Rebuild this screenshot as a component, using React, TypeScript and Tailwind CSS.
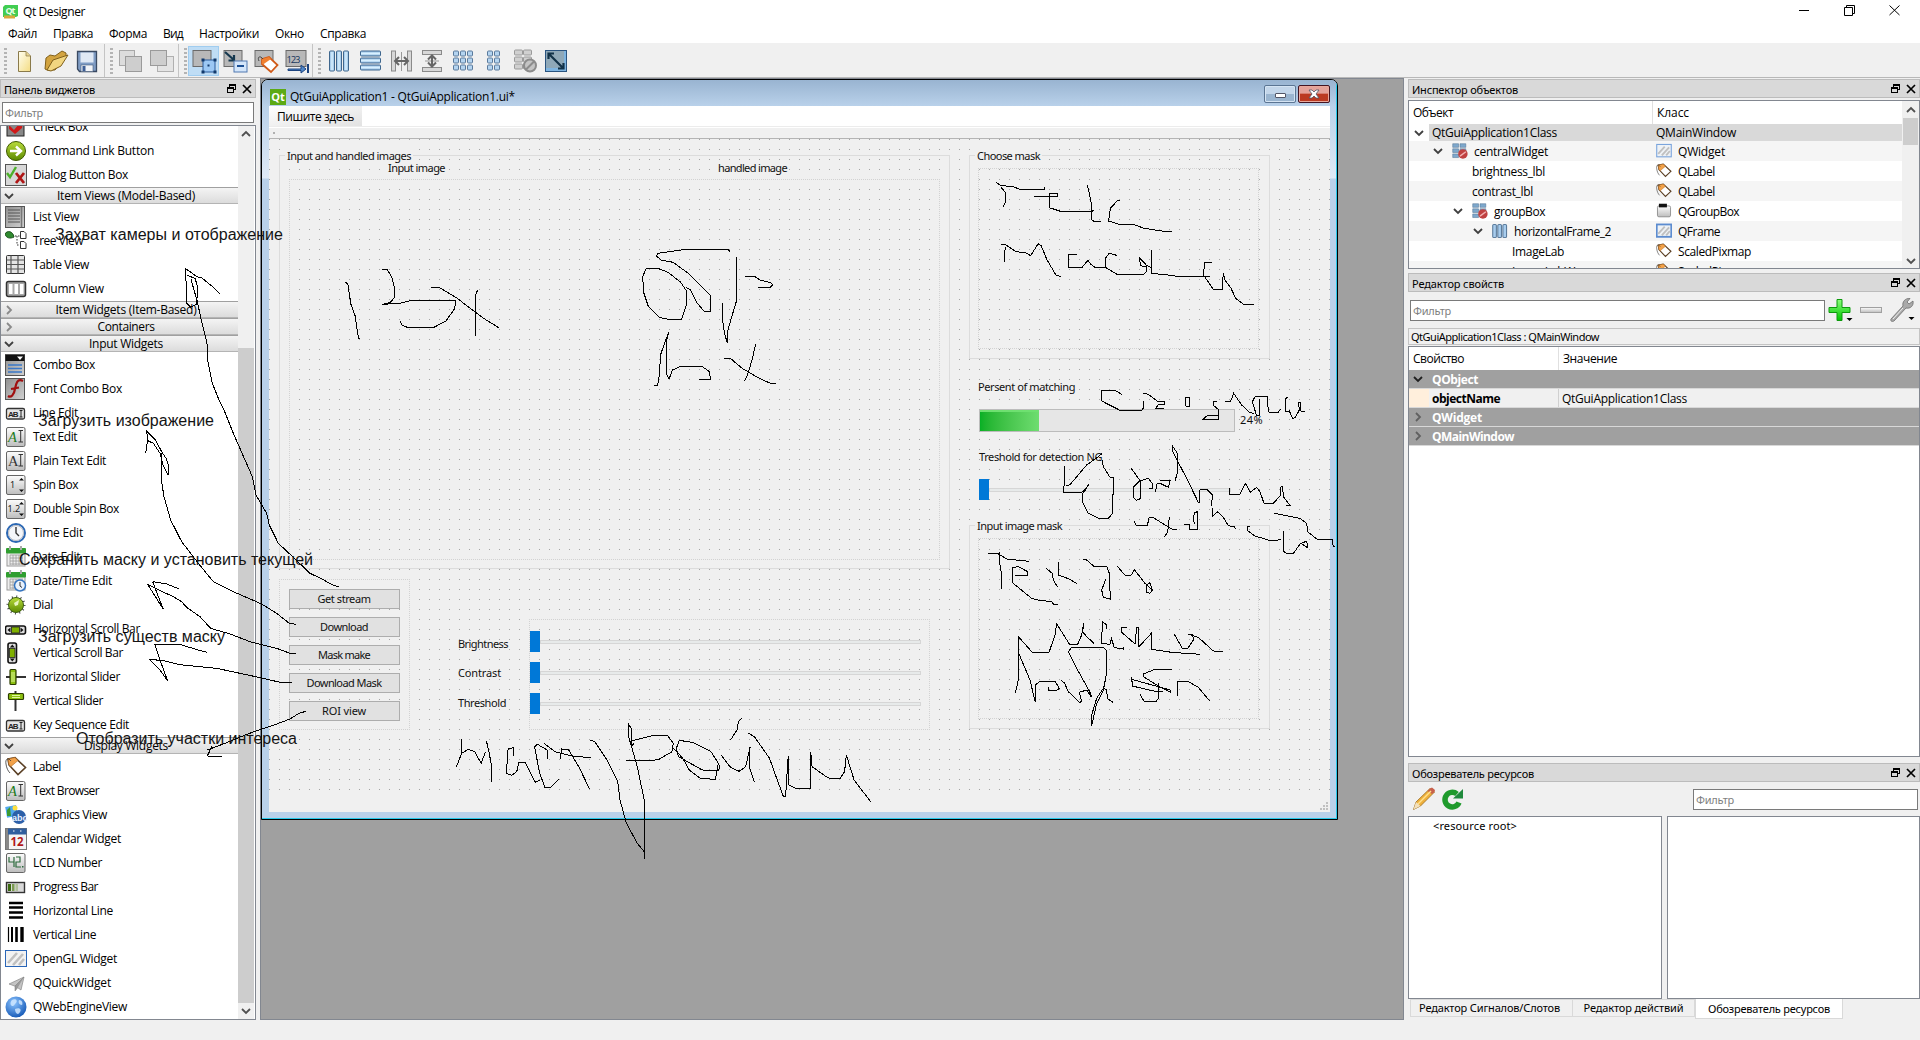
import { useLayoutEffect, useRef, useState } from "react";
import type { ReactNode } from "react";

/* ---------- text that keeps a fixed advance width ---------- */
function T({ w, children, className = "" }: { w: number; children: string; className?: string }) {
  const ref = useRef<HTMLSpanElement>(null);
  const [ls, setLs] = useState(0);
  useLayoutEffect(() => {
    const el = ref.current;
    if (!el) return;
    const prev = el.style.letterSpacing;
    el.style.letterSpacing = "0px";
    const natural = el.getBoundingClientRect().width;
    el.style.letterSpacing = prev;
    setLs((w - natural) / children.length);
  }, [w, children]);
  return (
    <span ref={ref} className={"inline-block shrink-0 whitespace-pre " + className} style={{ letterSpacing: `${ls}px` }}>
      {children}
    </span>
  );
}

const SEGOE = "font-['Open_Sans','Noto_Sans',sans-serif] text-[12px] leading-[16px]";
const TAHOMA = "font-['Noto_Sans','Open_Sans',sans-serif] text-[11px] leading-[14px]";

/* ---------- widget box icons ---------- */
function Defs() {
  return (
    <svg width="0" height="0" className="absolute">
      <defs>
        <linearGradient id="gr" x1="0" y1="0" x2="0" y2="1">
          <stop offset="0" stopColor="#fdfdfd" />
          <stop offset="1" stopColor="#bdbdbd" />
        </linearGradient>
        <linearGradient id="dk" x1="0" y1="0" x2="1" y2="1">
          <stop offset="0" stopColor="#8f8f8f" />
          <stop offset="1" stopColor="#d2d2d2" />
        </linearGradient>
        <linearGradient id="bl" x1="0" y1="0" x2="1" y2="0">
          <stop offset="0" stopColor="#8db8e0" />
          <stop offset="0.5" stopColor="#d8f0ff" />
          <stop offset="1" stopColor="#8db8e0" />
        </linearGradient>
        <linearGradient id="blv" x1="0" y1="0" x2="0" y2="1">
          <stop offset="0" stopColor="#8db8e0" />
          <stop offset="0.5" stopColor="#d8f0ff" />
          <stop offset="1" stopColor="#8db8e0" />
        </linearGradient>
        <linearGradient id="gn" x1="0" y1="0" x2="0" y2="1">
          <stop offset="0" stopColor="#b9dc3c" />
          <stop offset="1" stopColor="#5c8a00" />
        </linearGradient>
        <linearGradient id="yl" x1="0" y1="0" x2="1" y2="1">
          <stop offset="0" stopColor="#fffef0" />
          <stop offset="1" stopColor="#f4dc82" />
        </linearGradient>
        <radialGradient id="gl" cx="0.4" cy="0.3" r="0.8">
          <stop offset="0" stopColor="#8cc4ff" />
          <stop offset="1" stopColor="#0a4fb0" />
        </radialGradient>
        <linearGradient id="plus" x1="0" y1="0" x2="0" y2="1">
          <stop offset="0" stopColor="#8aff7a" />
          <stop offset="1" stopColor="#00c400" />
        </linearGradient>
      </defs>
    </svg>
  );
}

const Frame = () => <rect x="1.5" y="1.500" width="18.500" height="19" rx="1.500" fill="url(#gr)" stroke="#666" />;
const Hatch = () => (
  <g stroke="#c0c0c0" strokeWidth="2.6">
    <path d="M3 15 L12 5 M8 17 L18 6 M14 17 L19 11" />
  </g>
);
const TagShape = () => (
  <g>
    <path d="M3 3 L10 1.500 L20.500 11.500 L13 18.500 L4 9 Z" fill="#fff" stroke="#5b4025" strokeWidth="1.600" />
    <path d="M3 3 L10 1.500 L13 4.500 L6 10.500 L4 9 Z" fill="#f2a24a" stroke="#b06820" strokeWidth="0.600" />
    <path d="M6 5 C3 1 0 3 1 8 C1.500 12 3 15 5 17" fill="none" stroke="#333" strokeWidth="0.800" />
  </g>
);
const Calendar = () => (
  <g>
    <rect x="2" y="4" width="18" height="16" fill="#eee" stroke="#999" />
    <path d="M5 9H18M5 12H18M5 15H18M5 18H18M5 9V19M8 9V19M11 9V19M14 9V19M17 9V19" stroke="#999" strokeWidth="0.8" />
    <rect x="1" y="2" width="20" height="5.500" rx="1" fill="#2f9e2f" />
    <path d="M5 0V4M16 0V4" stroke="#aaa" strokeWidth="2" />
  </g>
);

function WIcon({ n }: { n: string }) {
  return (
    <svg width="22" height="22" viewBox="0 0 22 22" className="shrink-0">
      {n === "check" && (
        <g>
          <rect x="2" y="2" width="17" height="18" fill="#888" stroke="#222" />
          <path d="M4 9 L9 14 L18 3 L17 12 L10 18 L4 13 Z" fill="#d01818" />
        </g>
      )}
      {n === "cmd" && (
        <g>
          <circle cx="11" cy="11" r="9.500" fill="url(#gn)" stroke="#3e5a00" />
          <path d="M5 11H15M11 6.500L16 11L11 15.500" fill="none" stroke="#fff" strokeWidth="2.400" />
        </g>
      )}
      {n === "dlg" && (
        <g>
          <rect x="0.500" y="0.500" width="21" height="21" fill="#d8d8d8" stroke="#555" />
          <path d="M2 9L5 13L11 3" fill="none" stroke="#4cb02a" strokeWidth="2.400" />
          <path d="M11 9L19 19M19 9L11 19" stroke="#b01616" strokeWidth="2.800" />
        </g>
      )}
      {n === "list" && (
        <g>
          <rect x="0.500" y="0.500" width="19" height="21" fill="url(#dk)" stroke="#555" />
          <path d="M3 4H15M3 7H15M3 10H15M3 13H15M3 16H15" stroke="#555" />
          <path d="M16.500 1V21" stroke="#777" strokeWidth="1.500" />
        </g>
      )}
      {n === "tree" && (
        <g>
          <path d="M0 4C2 0 8 1 9 7C5 9 1 8 0 4Z" fill="#2f8a2f" stroke="#1c4f1c" />
          <path d="M10 6H15M12 6V15H15" fill="none" stroke="#333" strokeDasharray="1.500 1.500" />
          <path d="M15.500 1.500H19L21 3.500V8.500H15.500ZM15.500 11.500H19L21 13.500V18.500H15.500Z" fill="#fff" stroke="#333" />
        </g>
      )}
      {n === "table" && (
        <g>
          <rect x="1.500" y="1.500" width="18" height="18" rx="1" fill="#e4e4e4" stroke="#333" />
          <path d="M1.500 6H19.500M1.500 10.500H19.500M1.500 15H19.500M6 1.500V19.500M13 1.500V19.500" stroke="#555" strokeWidth="1.200" />
        </g>
      )}
      {n === "column" && (
        <g>
          <rect x="1.500" y="3.500" width="19" height="15" rx="2" fill="#a8a8a8" stroke="#333" strokeWidth="1.500" />
          <path d="M4 6H7.500V16H4ZM9.500 6H13V16H9.500ZM15 6H18.500V16H15Z" fill="#fff" />
        </g>
      )}
      {n === "combo" && (
        <g>
          <rect x="0.500" y="0.500" width="19" height="21" fill="url(#dk)" stroke="#555" />
          <rect x="0.500" y="1" width="19" height="6" fill="#111" />
          <path d="M12 2.500H18L15 6Z" fill="#fff" />
          <path d="M3 11H17M3 14.500H17M3 18H17" stroke="#3a78c8" strokeWidth="1.600" />
        </g>
      )}
      {n === "font" && (
        <g>
          <rect x="0.500" y="0.500" width="19" height="21" fill="url(#dk)" stroke="#555" />
          <path d="M18 3C12 0 11 6 10 11C9 17 6 20 3 18M6 11L14 9.500" fill="none" stroke="#a01010" strokeWidth="2.200" />
        </g>
      )}
      {n === "abi" && (
        <g>
          <rect x="1.500" y="6.500" width="18" height="10.500" rx="1.500" fill="#e4e4e4" stroke="#333" strokeWidth="1.300" />
          <text x="3" y="14.800" fontSize="8" textLength="10.500" fontWeight="bold" fill="#222" fontFamily="Liberation Sans">AB</text>
          <path d="M14.500 8.500H17.500M16 8.500V15M14.500 15H17.500" stroke="#222" fill="none" />
        </g>
      )}
      {(n === "ai" || n === "aig") && (
        <g>
          <Frame />
          <text x="3" y="16" fontSize="14.500" fontStyle={n === "aig" ? "italic" : "normal"} fill={n === "aig" ? "#1c7a1c" : "#333"} fontFamily="Liberation Serif">A</text>
          <path d="M13.500 4.500H18M15.700 4.500V16M13.500 16H18" stroke="#333" fill="none" />
        </g>
      )}
      {(n === "spin" || n === "dspin") && (
        <g>
          <Frame />
          <text x={n === "spin" ? 5 : 2.5} y="14" fontSize="9" fill="#222" fontFamily="Noto Sans">{n === "spin" ? "1" : "1.2"}</text>
          <path d="M14 6.500L16.500 4L19 6.500ZM14 15.500L16.500 18L19 15.500Z" fill="#111" />
        </g>
      )}
      {n === "time" && (
        <g>
          <circle cx="11" cy="11" r="9" fill="#f4f6fa" stroke="#2c68b4" strokeWidth="2" />
          <circle cx="11" cy="11" r="7.500" fill="none" stroke="#b8bcc4" strokeWidth="1" />
          <path d="M11 5V11L14 14" fill="none" stroke="#333" strokeWidth="1.400" />
        </g>
      )}
      {n === "date" && <Calendar />}
      {n === "datetime" && (
        <g>
          <Calendar />
          <circle cx="15" cy="15.500" r="5.500" fill="#e8f1fc" stroke="#3474c0" strokeWidth="1.500" />
          <path d="M15 12V16L17 17.500" fill="none" stroke="#333" />
        </g>
      )}
      {n === "dial" && (
        <g>
          <circle cx="11" cy="11" r="8.500" fill="none" stroke="#444" strokeWidth="2" strokeDasharray="1 3.450" />
          <circle cx="11" cy="11" r="7.500" fill="url(#gn)" stroke="#3c5e10" />
          <path d="M14 6L13 11L10 12L9 9Z" fill="#e8f5c0" />
        </g>
      )}
      {n === "hscroll" && (
        <g>
          <rect x="0.500" y="8" width="20" height="8" rx="2" fill="#ddd" stroke="#111" strokeWidth="1.600" />
          <path d="M5.500 9.500V14.500L2.500 12ZM15.500 9.500V14.500L18.500 12Z" fill="#111" />
          <rect x="6.500" y="9" width="8" height="6" fill="#7fb000" stroke="#222" strokeWidth="0.800" />
        </g>
      )}
      {n === "vscroll" && (
        <g>
          <rect x="3" y="1" width="8.500" height="20" rx="2" fill="#ddd" stroke="#111" strokeWidth="1.600" />
          <path d="M4.800 5.500H9.800L7.300 2.500ZM4.800 16.500H9.800L7.300 19.500Z" fill="#111" />
          <rect x="4.500" y="6.500" width="5.500" height="9" fill="#7fb000" stroke="#222" strokeWidth="0.800" />
        </g>
      )}
      {n === "hslider" && (
        <g>
          <path d="M1 11H21" stroke="#333" strokeWidth="2" />
          <rect x="5" y="3.500" width="6" height="15" rx="1" fill="#8cc010" stroke="#2c3c00" strokeWidth="1.200" />
          <path d="M7 6V16M9 6V16" stroke="#e0f8a0" />
        </g>
      )}
      {n === "vslider" && (
        <g>
          <path d="M10.500 1V21" stroke="#333" strokeWidth="2" />
          <rect x="3.500" y="3.500" width="15" height="6" rx="1" fill="#8cc010" stroke="#2c3c00" strokeWidth="1.200" />
          <path d="M7 5.500H15M7 7.500H15" stroke="#e0f8a0" />
        </g>
      )}
      {n === "label" && <TagShape />}
      {n === "graphics" && (
        <g>
          <rect x="1" y="2" width="11" height="11" fill="#4fa8ee" transform="rotate(-10 6 7)" />
          <circle cx="10" cy="4" r="2.500" fill="#ffe040" />
          <path d="M2 6L5 3L6 12L2 12Z" fill="#3c9a30" />
          <circle cx="14" cy="13" r="7" fill="#2c5fa8" />
          <text x="7" y="17" fontSize="9" fill="#e6efff" fontFamily="Liberation Sans" fontWeight="bold">abc</text>
        </g>
      )}
      {n === "calendar" && (
        <g>
          <rect x="0.500" y="0.500" width="21" height="21" fill="#f4f4f4" stroke="#777" />
          <rect x="1" y="1" width="3" height="20" fill="#888" />
          <rect x="3" y="0.500" width="18.500" height="6" fill="#2f5e9e" />
          <path d="M8 3H9.500M15 3H16.500" stroke="#fff" />
          <text x="5.500" y="18" fontSize="11.500" fill="#b01818" fontFamily="Noto Sans" fontWeight="bold">12</text>
        </g>
      )}
      {n === "lcd" && (
        <g>
          <Frame />
          <path d="M4 5V10H9M9 5V15M11 5H15V10H11V15H16" fill="none" stroke="#2c6a3c" strokeWidth="1.200" />
          <rect x="17" y="14" width="1.500" height="1.500" fill="#2c6a3c" />
        </g>
      )}
      {n === "progress" && (
        <g>
          <rect x="1.500" y="6.500" width="18" height="10" fill="#d8d8d8" stroke="#333" strokeWidth="1.400" />
          <path d="M3 8H6V15H3Z" fill="#3c6a10" />
          <path d="M7 8H9.500V15H7Z" fill="#7a9a50" />
          <path d="M10.500 8H13V15H10.500Z" fill="#b0c09a" />
        </g>
      )}
      {n === "hline" && <path d="M4 3H18M4 7.500H18M4 12.500H18M4 17.500H18" stroke="#000" strokeWidth="2.600" />}
      {n === "vline" && (
        <g stroke="#000">
          <path d="M3.500 3V18" strokeWidth="1.200" />
          <path d="M7 3V18" strokeWidth="2" />
          <path d="M11.500 3V18" strokeWidth="2.600" />
          <path d="M17 3V18" strokeWidth="3.400" />
        </g>
      )}
      {n === "opengl" && (
        <g>
          <rect x="0.500" y="2.500" width="21" height="16" fill="#f2f2f2" stroke="#2a66b8" />
          <Hatch />
        </g>
      )}
      {n === "quick" && (
        <g>
          <path d="M4 12L19 5L16 18L11 14.500Z" fill="#c4c4c4" stroke="#888" strokeWidth="0.700" />
          <path d="M19 5L10 14L10 19L12.500 16" fill="#9a9a9a" stroke="#777" strokeWidth="0.500" />
        </g>
      )}
      {n === "web" && (
        <g>
          <circle cx="11" cy="11" r="10.500" fill="url(#gl)" />
          <path d="M7 4C11 2 13 5 11 7C9 8 10 10 7 10C5 9 5 6 7 4ZM14 4C17 4 18 7 17 9C14 9 13 6 14 4ZM10 13C14 11 17 13 15 16C13 20 10 17 10 13Z" fill="#cfe6ff" opacity="0.850" />
        </g>
      )}
    </svg>
  );
}

const CHEV_DOWN = "M1 3L5 7L9 3";
const CHEV_RIGHT = "M3 1L7 5L3 9";
const CHEV_UP = "M1 7L5 3L9 7";
function Chevron({ d, color = "#404040" }: { d: string; color?: string }) {
  return (
    <svg width="10" height="10" viewBox="0 0 10 10" className="shrink-0">
      <path d={d} fill="none" stroke={color} strokeWidth="1.8" />
    </svg>
  );
}

function DockTitle({ title, w }: { title: string; w: number }) {
  return (
    <div className={"flex h-[19px] shrink-0 items-center border border-[#bcbcbc] bg-[#d9d9d9] pl-[3px] pr-[3px] " + TAHOMA}>
      <T w={w} className="pt-[2px]">{title}</T>
      <svg width="10" height="10" viewBox="0 0 10 10" className="ml-auto mr-[6px]" shapeRendering="crispEdges">
        <path d="M3 0H10V6H8V9H1V3H3Z" fill="#000" />
        <path d="M4 2H9V5H8V3H4ZM2 5H7V8H2Z" fill="#d9d9d9" />
      </svg>
      <svg width="10" height="10" viewBox="0 0 10 10">
        <path d="M1 1L9 9M9 1L1 9" stroke="#000" strokeWidth="1.700" />
      </svg>
    </div>
  );
}

function FilterBox({ className }: { className: string }) {
  return (
    <div className={"flex h-[21px] items-center border border-[#7a7a7a] bg-white pl-[2px] text-[#808080] " + TAHOMA + " " + className}>
      <T w={38} className="pt-px">Фильтр</T>
    </div>
  );
}

/* ---------- widget box ---------- */
type Row = { i: string; t: string; w: number };
type Group = { t: string; w: number; open: boolean; rows: Row[] };
const lead: Row[] = [
  { i: "check", t: "Check Box", w: 55 },
  { i: "cmd", t: "Command Link Button", w: 121 },
  { i: "dlg", t: "Dialog Button Box", w: 95 },
];
const groups: Group[] = [
  {
    t: "Item Views (Model-Based)", w: 138, open: true,
    rows: [
      { i: "list", t: "List View", w: 46 },
      { i: "tree", t: "Tree View", w: 50 },
      { i: "table", t: "Table View", w: 56 },
      { i: "column", t: "Column View", w: 71 },
    ],
  },
  { t: "Item Widgets (Item-Based)", w: 141, open: false, rows: [] },
  { t: "Containers", w: 57, open: false, rows: [] },
  {
    t: "Input Widgets", w: 74, open: true,
    rows: [
      { i: "combo", t: "Combo Box", w: 62 },
      { i: "font", t: "Font Combo Box", w: 89 },
      { i: "abi", t: "Line Edit", w: 45 },
      { i: "aig", t: "Text Edit", w: 44 },
      { i: "ai", t: "Plain Text Edit", w: 73 },
      { i: "spin", t: "Spin Box", w: 45 },
      { i: "dspin", t: "Double Spin Box", w: 86 },
      { i: "time", t: "Time Edit", w: 50 },
      { i: "date", t: "Date Edit", w: 47 },
      { i: "datetime", t: "Date/Time Edit", w: 79 },
      { i: "dial", t: "Dial", w: 20 },
      { i: "hscroll", t: "Horizontal Scroll Bar", w: 107 },
      { i: "vscroll", t: "Vertical Scroll Bar", w: 90 },
      { i: "hslider", t: "Horizontal Slider", w: 87 },
      { i: "vslider", t: "Vertical Slider", w: 70 },
      { i: "abi", t: "Key Sequence Edit", w: 96 },
    ],
  },
  {
    t: "Display Widgets", w: 84, open: true,
    rows: [
      { i: "label", t: "Label", w: 28 },
      { i: "aig", t: "Text Browser", w: 66 },
      { i: "graphics", t: "Graphics View", w: 74 },
      { i: "calendar", t: "Calendar Widget", w: 88 },
      { i: "lcd", t: "LCD Number", w: 69 },
      { i: "progress", t: "Progress Bar", w: 65 },
      { i: "hline", t: "Horizontal Line", w: 80 },
      { i: "vline", t: "Vertical Line", w: 63 },
      { i: "opengl", t: "OpenGL Widget", w: 84 },
      { i: "quick", t: "QQuickWidget", w: 78 },
      { i: "web", t: "QWebEngineView", w: 94 },
    ],
  },
];

function WRow({ r }: { r: Row }) {
  return (
    <div className="flex h-[24px] shrink-0 items-center gap-[6px] pl-[4px]">
      <WIcon n={r.i} />
      <T w={r.w}>{r.t}</T>
    </div>
  );
}

function WidgetBox() {
  return (
    <div className="flex w-[256px] flex-col pt-px">
      <DockTitle title="Панель виджетов" w={91} />
      <FilterBox className="ml-[2px] mr-[2px] mt-[4px]" />
      <div className="mt-[2px] flex h-[895px] border border-[#828790] bg-white">
        <div className={"flex h-full w-[237px] flex-col justify-end overflow-hidden " + SEGOE}>
          {lead.map((r) => <WRow key={r.t} r={r} />)}
          {groups.map((g) => (
            <div key={g.t} className="flex shrink-0 flex-col">
              <div className="flex h-[17px] items-center border-y border-t-[#a0a0a0] border-b-[#b4b4b4] bg-linear-to-b from-[#f4f4f4] to-[#dcdcdc] pl-[3px]">
                <Chevron d={g.open ? CHEV_DOWN : CHEV_RIGHT} color={g.open ? "#404040" : "#8a8a8a"} />
                <div className="flex flex-1 justify-center">
                  <T w={g.w}>{g.t}</T>
                </div>
              </div>
              {g.open && <div className="h-px" />}
              {g.rows.map((r) => <WRow key={r.t} r={r} />)}
            </div>
          ))}
        </div>
        <div className="flex w-[16px] flex-col items-center bg-[#f0f0f0]">
          <div className="pt-[3px]"><Chevron d={CHEV_UP} color="#505050" /></div>
          <div className="mt-auto h-[655px] w-full bg-[#cdcdcd]" />
          <div className="flex h-[16px] items-center"><Chevron d={CHEV_DOWN} color="#505050" /></div>
        </div>
      </div>
    </div>
  );
}

/* ---------- toolbar ---------- */
function TB({ children, active, className = "" }: { children: ReactNode; active?: boolean; className?: string }) {
  return (
    <div className={"flex h-[30px] w-[31px] shrink-0 items-center justify-center " + (active ? "bg-[#bfddf5] outline outline-1 -outline-offset-1 outline-[#a0cdf0] " : "") + className}>
      <svg width="26" height="26" viewBox="0 0 26 26">{children}</svg>
    </div>
  );
}
function Handle() {
  return <div className="h-[26px] w-[3px] shrink-0 bg-[repeating-linear-gradient(#b4b4b4_0_2px,transparent_2px_4px)]" />;
}
const Sep = () => <div className="mr-[5px] h-[33px] w-px shrink-0 bg-[#c4c4c4]" />;
const grayBox = { fill: "#b8b8b8", stroke: "#6a6a6a" };

function ToolbarRow() {
  return (
    <div className="flex h-[35px] items-center pl-[4px]">
      <Handle />
      <TB className="ml-[2px]">
        <path d="M6.500 3.500H14L18.500 8V23.500H6.500Z" fill="url(#yl)" stroke="#8a7a4a" />
        <path d="M14 3.500V8H18.500" fill="#e8d490" stroke="#8a7a4a" strokeWidth="0.700" />
      </TB>
      <TB>
        <path d="M2 21L3 10L7 7L12 8L19 3L23 5V9L12 22H4Z" fill="#d3a440" stroke="#80601c" />
        <path d="M4 22L10 12L25 7L18 18L8 23Z" fill="#f2d680" stroke="#80601c" />
      </TB>
      <TB>
        <path d="M3.500 3.500H22.500V23.500H5.500L3.500 21Z" fill="#7f9cc4" stroke="#3a4a62" strokeWidth="1.300" />
        <rect x="6.500" y="4.500" width="13" height="10" fill="#dfe8f4" />
        <rect x="7" y="17" width="12" height="6.500" fill="#f2f4f8" stroke="#445a7a" strokeWidth="0.600" />
        <rect x="8.500" y="18" width="3" height="5" fill="#3e5f96" />
      </TB>
      <div className="w-[2px]" />
      <Sep />
      <Handle />
      <TB className="ml-[2px]">
        <rect x="1.500" y="2.500" width="15" height="15" fill="#dcdcdc" stroke="#a8a8a8" />
        <rect x="7.500" y="8.500" width="16" height="15" fill="#cecece" stroke="#9a9a9a" />
      </TB>
      <TB>
        <rect x="8.500" y="8.500" width="16" height="15" fill="#e4e4e4" stroke="#b0b0b0" />
        <rect x="1.500" y="2.500" width="16" height="15" fill="#cecece" stroke="#9a9a9a" />
      </TB>
      <div className="w-px" />
      <Sep />
      <Handle />
      <TB active className="ml-[1px]">
        <rect x="2" y="2.500" width="18" height="16" {...grayBox} />
        <rect x="12" y="12" width="12" height="12" fill="#9cc8f4" stroke="#2a5a9a" />
        <path d="M10.500 10.500h3v3h-3zM22.500 10.500h3v3h-3zM10.500 22.500h3v3h-3zM22.500 22.500h3v3h-3zM16.500 16.500h2v2h-2z" fill="#123a6c" />
      </TB>
      <TB>
        <rect x="2" y="2.500" width="18" height="16" {...grayBox} />
        <path d="M3 4L12 12M12 7V12.500H6.500" stroke="#16384e" strokeWidth="2.200" fill="none" />
        <rect x="12" y="13" width="13" height="11" fill="#d4e6fa" stroke="#5078b0" />
        <path d="M15 18H22" stroke="#1c4f94" strokeWidth="2" />
      </TB>
      <TB>
        <rect x="2" y="2.500" width="18" height="16" {...grayBox} />
        <path d="M9 11L16 9L24.500 17L18 24L9 16Z" fill="#fff" stroke="#d05a18" strokeWidth="1.800" />
        <path d="M9 11L16 9L18 11L10 16.500L9 16Z" fill="#f08030" />
        <path d="M10 11C7 7 4 9 6 13" fill="none" stroke="#444" />
      </TB>
      <TB>
        <rect x="2" y="2.500" width="20" height="16" {...grayBox} />
        <text x="2.500" y="15" fontSize="9.500" fontFamily="Open Sans" fill="#16355c" textLength="14">123</text>
        <path d="M4 21H17V17L22 21L17 25V22.500H4Z" fill="#4f86c8" stroke="#1d4480" />
        <path d="M24 16V25" stroke="#1d4480" strokeWidth="2" />
      </TB>
      <Sep />
      <Handle />
      <TB className="ml-[2px]">
        {[3.5, 10.5, 17.5].map((x) => <rect key={x} x={x} y="3" width="5" height="20" rx="1" fill="url(#bl)" stroke="#3f678e" />)}
      </TB>
      <TB>
        {[3, 10, 17].map((y) => <rect key={y} x="3.500" y={y} width="20" height="5" rx="1" fill="url(#blv)" stroke="#3f678e" />)}
      </TB>
      <TB>
        <rect x="3.500" y="3" width="4" height="20" fill="#d8d8d8" stroke="#8a8a8a" />
        <rect x="19.500" y="3" width="4" height="20" fill="#d8d8d8" stroke="#8a8a8a" />
        <path d="M13.500 4V23" stroke="#999" />
        <path d="M7 13H20M11 9L7 13L11 17M16 9L20 13L16 17" fill="none" stroke="#666" strokeWidth="2" />
      </TB>
      <TB>
        <rect x="3.500" y="2.500" width="19" height="4" fill="#d8d8d8" stroke="#8a8a8a" />
        <rect x="3.500" y="19.500" width="19" height="4" fill="#d8d8d8" stroke="#8a8a8a" />
        <path d="M6 13H20" stroke="#999" />
        <path d="M13 8V18M9 11.500L13 7.500L17 11.500M9 14.500L13 18.500L17 14.500" fill="none" stroke="#666" strokeWidth="2" />
      </TB>
      <TB>
        {[3, 10, 17].map((y) => [3.5, 10.5, 17.5].map((x) => <rect key={`${x}-${y}`} x={x} y={y} width="5" height="5" rx="1" fill="#b4d4f0" stroke="#5a7a9c" />))}
      </TB>
      <TB>
        {[3, 10, 17].map((y) => [6.5, 13.5].map((x) => <rect key={`${x}-${y}`} x={x} y={y} width="5" height="5" rx="1" fill="#b4d4f0" stroke="#5a7a9c" />))}
      </TB>
      <TB>
        {[2, 9, 16].map((y) => [2.5, 11.5].map((x) => <rect key={`${x}-${y}`} x={x} y={y} width="8" height="5" rx="1" fill="#d0d0d0" stroke="#9a9a9a" />))}
        <circle cx="18" cy="17.500" r="6" fill="#c4c4c4" stroke="#8c8c8c" strokeWidth="2" />
        <path d="M14 21.500L22 13.500" stroke="#8c8c8c" strokeWidth="2" />
      </TB>
      <TB>
        <rect x="2.500" y="2.500" width="21" height="21" fill="#7fb4e0" stroke="#2a5480" />
        <rect x="3" y="3" width="18" height="17" fill="#8fa8b8" />
        <path d="M6 6L20 20M5.500 11V5.500H11M20.500 15V20.500H15" fill="none" stroke="#123248" strokeWidth="2.200" />
      </TB>
    </div>
  );
}

/* ---------- designed form ---------- */
function GroupFrame({ className, title, w }: { className: string; title: string; w: number }) {
  return (
    <div className={"absolute border border-[#dcdcdc] " + className}>
      <div className="absolute -top-[8px] left-[5px] flex h-[15px] items-center bg-[#f0f0f0] px-[2px]">
        <T w={w}>{title}</T>
      </div>
    </div>
  );
}
function Dotted({ className }: { className: string }) {
  return <div className={"absolute border border-dotted border-[#d2d2d2] " + className} />;
}
function Lbl({ className, children, w }: { className: string; children: string; w: number }) {
  return <div className={"absolute flex h-[14px] items-center " + className}><T w={w}>{children}</T></div>;
}
function Slider({ className }: { className: string }) {
  return (
    <div className={"absolute flex h-[21px] items-center " + className}>
      <div className="h-full w-[10px] bg-[#0078d7]" />
      <div className="h-[4px] flex-1 border border-[#d6d6d6] bg-[#e7eaea]" />
    </div>
  );
}

const buttons = [
  { t: "Get stream", w: 53 },
  { t: "Download", w: 48 },
  { t: "Mask make", w: 52 },
  { t: "Download Mask", w: 75 },
  { t: "ROI view", w: 44 },
];

function FormCanvas() {
  return (
    <div className={"relative h-[673px] bg-[#f0f0f0] text-[#111] " + TAHOMA}>
      <div className="h-[651px] bg-[linear-gradient(90deg,transparent_1px,#f0f0f0_1px),linear-gradient(#a4a4a4_1px,#f0f0f0_1px)] bg-[length:10px_10px]" />
      <GroupFrame className="left-[10px] top-[16px] h-[414px] w-[671px]" title="Input and handled images" w={124} />
      <Lbl className="left-[119px] top-[22px]" w={57}>Input image</Lbl>
      <Lbl className="left-[449px] top-[22px]" w={69}>handled image</Lbl>
      <Dotted className="left-[20px] top-[40px] h-[381px] w-[651px]" />
      <GroupFrame className="left-[700px] top-[16px] h-[204px] w-[301px]" title="Choose mask" w={63} />
      <Dotted className="left-[709px] top-[29px] h-[181px] w-[281px]" />
      <Lbl className="left-[709px] top-[241px]" w={97}>Persent of matching</Lbl>
      <div className="absolute left-[710px] top-[270px] flex h-[23px] w-[256px] border border-[#bcbcbc] bg-[#e6e6e6]">
        <div className="h-full w-[59px] border-t-2 border-t-[#6ee070] bg-linear-to-r from-[#06b025] to-[#6edd70]" />
      </div>
      <Lbl className="left-[971px] top-[274px]" w={23}>24%</Lbl>
      <Lbl className="left-[710px] top-[311px]" w={123}>Treshold for detection NG</Lbl>
      <Slider className="left-[710px] top-[340px] w-[252px]" />
      <GroupFrame className="left-[700px] top-[386px] h-[204px] w-[301px]" title="Input image mask" w={85} />
      <Dotted className="left-[709px] top-[399px] h-[181px] w-[281px]" />

      <div className="absolute left-[10px] top-[440px] flex h-[151px] w-[131px] flex-col gap-[8px] border border-dotted border-[#d2d2d2] px-[9px] pt-[9px]">
        {buttons.map((b) => (
          <div key={b.t} className="flex h-[20px] shrink-0 items-center justify-center border border-[#adadad] bg-[#e1e1e1] pr-px">
            <T w={b.w}>{b.t}</T>
          </div>
        ))}
      </div>
      <Lbl className="left-[189px] top-[498px]" w={50}>Brightness</Lbl>
      <Lbl className="left-[189px] top-[527px]" w={43}>Contrast</Lbl>
      <Lbl className="left-[189px] top-[557px]" w={48}>Threshold</Lbl>
      <Dotted className="left-[260px] top-[480px] h-[111px] w-[401px]" />
      <Slider className="left-[261px] top-[492px] w-[391px]" />
      <Slider className="left-[261px] top-[523px] w-[391px]" />
      <Slider className="left-[261px] top-[554px] w-[391px]" />
      <svg width="10" height="10" viewBox="0 0 10 10" className="absolute bottom-[1px] right-[1px]">
        <path d="M7 1h2v2h-2zM4 4h2v2h-2zM7 4h2v2h-2zM1 7h2v2h-2zM4 7h2v2h-2zM7 7h2v2h-2z" fill="#c0c0c0" />
      </svg>
    </div>
  );
}

function FormWindow() {
  return (
    <div className="absolute left-0 top-0 flex h-[741px] w-[1077px] flex-col overflow-hidden rounded-t-[7px] border border-black bg-[#b9d1ea]">
      <div className="flex min-h-0 flex-1 flex-col border-b border-r border-[#27c8ea]">
        <div className={"flex h-[26px] shrink-0 items-center bg-linear-to-b from-[#99b4d1] to-[#b9d1ea] pl-[8px] pr-[6px] " + SEGOE}>
          <div className="mt-[7px] flex h-[16px] w-[16px] items-center justify-center bg-[#5caa15] font-['Open_Sans',sans-serif] text-[11px] font-bold text-white">Qt</div>
          <T w={225} className="ml-[4px] mt-[8px]">QtGuiApplication1 - QtGuiApplication1.ui*</T>
          <div className="ml-auto mt-[2px] flex gap-[2px]">
            <div className="flex h-[18px] w-[32px] items-center justify-center rounded-[2px] border border-[#5b7593] bg-linear-to-b from-[#c3d6ea] from-50% to-[#9ab5d0] to-50% shadow-[inset_0_0_0_1px_#d5e4f3]">
              <div className="mt-[3px] h-[5px] w-[11px] rounded-[1px] border border-[#535666] bg-white" />
            </div>
            <div className="flex h-[18px] w-[32px] items-center justify-center rounded-[2px] border border-[#431422] bg-linear-to-b from-[#e4a29a] from-45% to-[#bb3a22] to-50% shadow-[inset_0_0_0_1px_#e8a89c]">
              <svg width="12" height="10" viewBox="0 0 12 10">
                <path d="M1 1H4L6 3L8 1H11L8 5L11 9H8L6 7L4 9H1L4 5Z" fill="#fff" stroke="#535666" strokeWidth="0.800" />
              </svg>
            </div>
          </div>
        </div>
        <div className="flex min-h-0 flex-1 bg-[linear-gradient(#b9d1ea,#dfeaf7_72px,#b9d1ea_73px)] pb-[6px] pl-[7px] pr-[6px]">
          <div className="flex w-full flex-col">
            <div className={"flex h-[20px] bg-white " + SEGOE}>
              <div className="flex w-[93px] items-center bg-linear-to-br from-white to-[#e2e2e2] pl-[8px]">
                <T w={77} className="pt-[2px]">Пишите здесь</T>
              </div>
            </div>
            <div className="h-px bg-[#ececec]" />
            <div className="flex h-[12px] items-center border-b border-t border-b-[#b4b4b4] border-t-white bg-[#f0f0f0] pl-[4px]">
              <div className="h-[2px] w-[2px] bg-[#b0b0b0]" />
            </div>
            <FormCanvas />
          </div>
        </div>
      </div>
    </div>
  );
}

/* ---------- right docks ---------- */
type Obj = { pad: string; chev?: boolean; icon?: string; t: string; w: number; ci: string; c: string; cw: number; bg: string };
const objs: Obj[] = [
  { pad: "pl-[24px]", chev: true, icon: "nolayout", t: "centralWidget", w: 74, ci: "widget", c: "QWidget", cw: 47, bg: "bg-[#f5f5f5]" },
  { pad: "pl-[63px]", t: "brightness_lbl", w: 73, ci: "label", c: "QLabel", cw: 37, bg: "bg-white" },
  { pad: "pl-[63px]", t: "contrast_lbl", w: 61, ci: "label", c: "QLabel", cw: 37, bg: "bg-[#f5f5f5]" },
  { pad: "pl-[44px]", chev: true, icon: "nolayout", t: "groupBox", w: 51, ci: "group", c: "QGroupBox", cw: 61, bg: "bg-white" },
  { pad: "pl-[64px]", chev: true, icon: "hlayout", t: "horizontalFrame_2", w: 97, ci: "frame", c: "QFrame", cw: 42, bg: "bg-[#f5f5f5]" },
  { pad: "pl-[103px]", t: "ImageLab", w: 52, ci: "label", c: "ScaledPixmap", cw: 73, bg: "bg-white" },
  { pad: "pl-[103px]", t: "ImageLabW", w: 63, ci: "label", c: "ScaledPixmap", cw: 73, bg: "bg-[#f5f5f5]" },
];

function ObjIcon({ n }: { n: string }) {
  return (
    <svg width="16" height="16" viewBox="0 0 22 22" className="shrink-0">
      {n === "nolayout" && (
        <g>
          <path d="M1 1h8v5h-8zM11 1h8v5h-8zM1 8h8v5h-8zM11 8h8v5h-8zM1 15h8v5h-8z" fill="#7ea8cc" stroke="#4c6e90" strokeWidth="0.700" />
          <circle cx="15" cy="15" r="6.500" fill="#c04040" />
          <path d="M11 18L19 12" stroke="#f0b0b0" strokeWidth="2" />
        </g>
      )}
      {n === "hlayout" && [1, 8, 15].map((x) => <rect key={x} x={x} y="2" width="5" height="18" rx="1.500" fill="#a8cdee" stroke="#5c7c9c" strokeWidth="1.500" />)}
      {(n === "widget" || n === "frame") && (
        <g>
          <rect x="1" y="2" width="20" height="17" fill="#eef2f6" stroke={n === "frame" ? "#5c8cd0" : "#7aa4dc"} strokeWidth={n === "frame" ? 2.5 : 1.5} />
          <Hatch />
        </g>
      )}
      {n === "label" && <TagShape />}
      {n === "group" && (
        <g>
          <rect x="2" y="4" width="18" height="15" rx="2" fill="url(#gr)" stroke="#777" />
          <rect x="4" y="1" width="11" height="5" fill="#111" />
        </g>
      )}
    </svg>
  );
}

function ObjectInspector() {
  return (
    <>
      <DockTitle title="Инспектор объектов" w={106} />
      <div className={"mt-[2px] flex h-[169px] border border-[#828790] bg-white " + SEGOE}>
        <div className="flex w-[493px] flex-col overflow-hidden">
          <div className="flex h-[23px] shrink-0 items-center">
            <div className="flex h-full w-[244px] items-center border-r border-[#e0e0e0] pl-[4px]"><T w={40} className="pt-px">Объект</T></div>
            <div className="pl-[4px]"><T w={32} className="pt-px">Класс</T></div>
          </div>
          <div className="flex h-[17px] shrink-0 items-center">
            <div className="flex w-[20px] justify-center"><Chevron d={CHEV_DOWN} /></div>
            <div className="flex h-full flex-1 items-center bg-[#d9d9d9] pl-[3px]">
              <div className="w-[224px]"><T w={125}>QtGuiApplication1Class</T></div>
              <T w={80}>QMainWindow</T>
            </div>
          </div>
          {objs.map((o) => (
            <div key={o.t} className={"flex h-[20px] shrink-0 items-center " + o.bg}>
              <div className={"flex w-[247px] items-center " + o.pad}>
                {o.chev && <Chevron d={CHEV_DOWN} />}
                {o.icon && <div className="ml-[9px] mr-[6px] flex"><ObjIcon n={o.icon} /></div>}
                <T w={o.w} className="pt-[2px]">{o.t}</T>
              </div>
              <ObjIcon n={o.ci} />
              <T w={o.cw} className="ml-[6px] pt-[2px]">{o.c}</T>
            </div>
          ))}
        </div>
        <div className="flex w-[17px] flex-col items-center bg-[#f0f0f0]">
          <div className="flex h-[17px] items-center"><Chevron d={CHEV_UP} color="#505050" /></div>
          <div className="h-[27px] w-[15px] bg-[#cdcdcd]" />
          <div className="mt-auto flex h-[15px] items-center"><Chevron d={CHEV_DOWN} color="#505050" /></div>
        </div>
      </div>
    </>
  );
}

function PropHead({ t, w, open }: { t: string; w: number; open?: boolean }) {
  return (
    <div className="flex h-[19px] items-center border-b border-[#d8d8d8] bg-[#a0a0a0] pl-[4px]">
      <Chevron d={open ? CHEV_DOWN : CHEV_RIGHT} color={open ? "#202020" : "#606060"} />
      <T w={w} className="ml-[9px] pt-[2px] font-bold text-white">{t}</T>
    </div>
  );
}

function PropertyEditor() {
  return (
    <>
      <div className="h-[4px]" />
      <DockTitle title="Редактор свойств" w={92} />
      <div className="flex h-[36px] items-center pl-[2px]">
        <FilterBox className="mt-[2px] w-[415px]" />
        <svg width="26" height="24" viewBox="0 0 26 24" className="ml-[3px] mt-px">
          <path d="M9 1.500H14V9.500H22V14.500H14V22.500H9V14.500H1V9.500H9Z" fill="url(#plus)" stroke="#0d9a0d" />
          <path d="M18.500 20H24.500L21.500 23Z" fill="#000" />
        </svg>
        <svg width="24" height="24" viewBox="0 0 24 24" className="ml-[5px]">
          <rect x="1.500" y="9.500" width="21" height="5" fill="url(#gr)" stroke="#a0a0a0" />
        </svg>
        <svg width="26" height="26" viewBox="0 0 26 26" className="ml-[6px]">
          <path d="M2 22L14 9C13 5 16 1 21 1.500L18 5L20 7L24 4C25 9 21 12 17 11L5 24C3 25 1 24 2 22Z" fill="#a9a9a9" stroke="#6c6c6c" strokeWidth="0.800" />
          <path d="M4 22L14 11" stroke="#eee" />
          <path d="M19.500 20H25.500L22.500 23Z" fill="#000" />
        </svg>
      </div>
      <div className={"flex h-[17px] shrink-0 items-center border border-[#c4c4c4] pl-[2px] " + TAHOMA}>
        <T w={188} className="pt-[1px]">QtGuiApplication1Class : QMainWindow</T>
      </div>
      <div className={"mt-px flex h-[412px] flex-col border border-[#828790] bg-white " + SEGOE}>
        <div className="flex h-[23px] items-center">
          <div className="flex h-full w-[150px] items-center border-r border-[#e0e0e0] pl-[4px]"><T w={51} className="pt-[2px]">Свойство</T></div>
          <div className="pl-[4px]"><T w={54} className="pt-[2px]">Значение</T></div>
        </div>
        <PropHead t="QObject" w={46} open />
        <div className="flex h-[19px] items-center border-b border-[#d8d8d8] bg-[#f0f0f0]">
          <div className="h-full w-[20px] bg-[#ffefdc]" />
          <div className="flex h-full w-[130px] items-center border-r border-[#d0d0d0] pl-[3px]"><T w={68} className="pt-[2px] font-bold">objectName</T></div>
          <T w={125} className="ml-[3px] pt-[2px]">QtGuiApplication1Class</T>
        </div>
        <PropHead t="QWidget" w={50} />
        <PropHead t="QMainWindow" w={82} />
      </div>
      <div className="h-px" />
    </>
  );
}

function ResourceBrowser() {
  return (
    <>
      <div className="h-[5px]" />
      <DockTitle title="Обозреватель ресурсов" w={122} />
      <div className="flex h-[34px] items-center pl-[4px] pr-[2px]">
        <svg width="24" height="24" viewBox="0 0 24 24">
          <path d="M1.500 22.500L4 15L18 1.500L22.500 5L8.500 19Z" fill="#eeb03c" stroke="#9a6a1c" strokeWidth="0.800" />
          <path d="M1.500 22.500L4 15L8.500 19Z" fill="#f2e0bc" />
          <path d="M18 1.500L20 0.500L23 3L22.500 5L20 7L15.500 4Z" fill="#c8604c" />
          <path d="M6 17L19 4" stroke="#ffe08c" strokeWidth="1.500" />
        </svg>
        <svg width="24" height="24" viewBox="0 0 24 24" className="ml-[5px]">
          <path d="M18 15.500A7.300 7.300 0 1 1 16 7" fill="none" stroke="#1f9a2c" strokeWidth="5.500" />
          <path d="M12 11.500H22V2Z" fill="#1f8a3c" />
        </svg>
        <FilterBox className="ml-auto w-[225px]" />
      </div>
      <div className={"flex h-[183px] gap-[5px] " + TAHOMA}>
        <div className="flex w-[254px] items-start border border-[#828790] bg-white pl-[24px] pt-[2px]"><T w={84}>{"<resource root>"}</T></div>
        <div className="flex-1 border border-[#828790] bg-white" />
      </div>
      <div className={"flex h-[21px] items-start pl-[2px] " + TAHOMA}>
        <div className="flex h-[18px] w-[163px] items-center justify-center border border-[#d9d9d9] pr-[4px]"><T w={141}>Редактор Сигналов/Слотов</T></div>
        <div className="flex h-[18px] w-[122px] items-center justify-center border border-l-0 border-[#d9d9d9]"><T w={100}>Редактор действий</T></div>
        <div className="flex h-[20px] w-[148px] items-center justify-center border border-t-0 border-[#d9d9d9] bg-white"><T w={122}>Обозреватель ресурсов</T></div>
      </div>
    </>
  );
}

/* ---------- hand-drawn notes over the whole screen ---------- */
type Ink = { t: string; d: string[] };
const ink: Ink[] = [
  {
    t: "translate(0 110) scale(0.33333)",
    d: [
      "M555 475L577 490L590 500L606 504L640 532L661 553",
      "M557 478L560 580L572 592L590 582L593 530L585 505L562 496",
      "M573 508L582 540L592 575L606 640L621 700L623 750L637 820L655 865L672 900",
    ],
  },
  {
    t: "translate(0 400) scale(0.33333)",
    d: [
      "M657 0L672 30L700 100L757 230L768 285L800 340L808 375L835 430L880 472L930 520L960 534L1000 556L1017 560",
      "M437 160L443 120L440 93L465 118L485 155L500 178L506 200L504 226L490 198L480 160L460 130L443 122",
      "M484 160L484 240L492 290L512 360L545 425L595 490L640 545L700 575L785 612L830 640L868 670L887 673",
      "M458 545L500 552L520 560L536 566",
      "M458 545L475 590L490 628L460 580L443 553L480 572L520 590L545 605L560 622L600 650L632 685L690 702L750 725L830 745L870 760L887 760",
      "M622 757L595 750L545 735L465 735L480 780L503 843L480 810L448 778L490 782L540 794L650 805L720 820L790 835L840 847L875 847",
      "M917 934L895 941L870 957L830 972L740 1003L680 1028L622 1050M636 1038L622 1068L665 1070",
    ],
  },
  {
    t: "translate(260 75) scale(0.34435 0.33333)",
    d: [
      "M248 622L255 627L264 688L276 722L286 790L290 790",
      "M355 583L370 584L382 605L391 640L390 668L378 683L355 688L405 685L440 676L567 676L566 700L540 738L505 757L428 757L412 750L407 738",
      "M497 637L520 637L570 668L645 727L693 758",
      "M632 645L626 660L626 782",
      "M1364 529L1358 523L1235 523L1155 535L1151 543L1165 555L1200 562L1245 596L1308 662L1308 709L1290 709L1270 685L1250 645L1238 637",
      "M1240 650L1222 622L1185 592L1155 580L1122 580L1111 605L1115 655L1128 695L1160 727L1185 733L1225 732L1238 690Z",
      "M1383 546L1383 680L1370 725L1359 765L1357 805L1348 770L1343 730L1342 684",
      "M1408 604L1436 604L1452 615L1485 624L1488 630L1482 637L1446 637",
      "M1145 931L1155 930L1160 900L1163 840L1180 790L1187 772L1180 800L1180 895L1188 912L1198 885L1220 875L1285 875L1305 890L1308 913L1275 913",
      "M1347 850L1366 850L1400 880L1450 910L1480 924L1497 926",
      "M1439 808L1430 850L1418 893L1408 917",
    ],
  },
  {
    t: "translate(800 75) scale(0.38903 0.33333)",
    d: [
      "M504 322L515 331L550 336L565 343L628 343L628 337",
      "M517 337L528 352L528 380L523 395",
      "M601 364L661 364L661 355L641 355L641 398L675 411L748 411L757 404",
      "M739 331L748 380L750 434L755 439L775 439",
      "M822 376L815 378L798 400L793 438L820 448L858 449L885 460L930 468L955 469",
      "M516 508L530 510L555 530L580 533L593 542L612 506L620 512L635 555L658 600L670 605",
      "M530 515L525 530L525 560",
      "M712 539L690 539L690 577L725 577L740 556L748 568L758 577L785 577L785 550L795 535L814 541",
      "M785 577L815 598L883 598L890 590L890 575L875 572L873 549L890 570L902 578",
      "M903 525L903 595L945 600L970 604L1055 604",
      "M1058 563L1040 563L1037 600L1052 625L1062 643L1085 643L1088 595L1092 615L1108 640L1120 670L1140 688L1166 688",
    ],
  },
  {
    t: "translate(940 360) scale(0.33333)",
    d: [
      "M545 103L525 91L485 91L485 123L540 151L606 151L611 142L611 123",
      "M610 100L625 103L655 126L674 126L674 133L655 133L647 147L672 147",
      "M736 112L748 112L748 140L738 138Z",
      "M831 124L820 126L820 136L837 150L837 178L790 178L800 168L835 165",
      "M855 124L872 124L881 100L905 135L930 158L942 160",
      "M960 118L960 168L950 168L937 125L945 110L982 110L985 156L1015 157L1021 148",
      "M1042 112L1036 118L1036 155L1048 153L1058 176L1066 172L1078 150L1075 126L1082 128L1083 153L1095 154",
      "M373 318L373 370L370 397L425 397L447 374",
      "M378 377L390 374L440 315L475 290L487 280",
      "M487 300L490 320L510 352L520 352L518 460L505 475L475 475L445 460L429 430L428 400L440 385",
      "M573 324L600 362L582 380L580 412L590 421L603 415L603 362L625 355L638 372L638 385L627 385",
      "M647 395L650 372L660 370L685 382L690 362L660 362",
      "M705 362L712 340L712 280L697 257L698 275L740 355L775 427L780 427L780 390L800 388L817 405L815 437",
      "M870 384L870 405L898 405L917 370L930 397L950 382L960 395L972 430L1000 430L1020 408L1023 380L1028 380L1030 410L1050 436L1038 436",
      "M583 484L590 498L622 498L627 473L640 473L695 507L712 508",
      "M688 472L683 515L673 532",
      "M733 493L750 495L748 508L773 508L773 455L763 458L760 480L765 492",
      "M817 443L817 470L832 455L850 472L865 497L883 500L887 508",
      "M930 500L922 500L923 512L945 528L995 543L1022 539",
      "M1030 514L1032 575L1040 580L1060 580L1082 550L1103 563L1100 543L1078 553",
      "M1003 460L1080 475L1100 490L1103 515L1130 537L1177 540L1178 553L1184 562",
      "M145 580L172 580L200 597L266 604",
      "M179 576L179 610L184 640L184 688",
      "M225 646L263 646L263 635L235 620L219 622L217 668L275 715L300 722L335 724L340 732L354 733",
      "M319 626L337 640L340 660L352 680",
      "M355 606L355 645L385 656L410 670",
      "M430 598L440 600L462 619L500 619L508 640L511 717L490 712L485 690L497 658",
      "M532 619L557 648L572 648L583 629L615 670L637 690L630 700L620 697L618 675L630 668L637 690",
      "M226 998L235 960L235 830L277 877L327 877L347 820L349 790L390 855L412 855L425 825L431 790L428 815L440 830L462 850",
      "M500 808L500 795L487 785L485 850L510 853L514 835L523 863L550 867L552 860",
      "M560 802L546 802L543 815L585 852L590 802L595 802L597 860L634 820L634 868L695 877L781 883",
      "M703 823L728 867L742 867L760 840L758 823L745 823L775 832L820 873L848 874",
      "M235 877L270 960L286 1027L286 975L300 964L345 964L358 985L350 991L325 991L326 980",
      "M364 962L373 968L385 995L418 1027L425 1025L418 997L440 990L455 1012L448 990",
      "M455 1012L445 988L410 925L385 875L395 862L490 862L500 872L498 950L490 990L470 1030L455 1097L455 1065L470 1015L490 985L500 990L502 1015L520 1028",
      "M695 928L645 928L610 942L610 950L655 978L692 997L690 990L575 958L575 950L577 978L640 993L668 994",
      "M655 970L655 1015L648 1025L612 1024L600 1003",
      "M712 1007L712 965L745 965L775 982L808 1022",
    ],
  },
  {
    t: "translate(260 550) scale(0.43367 0.33333)",
    d: [
      "M453 650L465 610L480 598L495 605L510 640L520 605",
      "M464 568L465 610",
      "M522 572L527 600L533 640L534 695",
      "M585 617L584 593L572 597L568 670L580 676L592 665L597 637L612 638L635 697L645 690",
      "M662 626L662 600L640 583L633 590L645 670L657 712L670 712L690 686",
      "M655 580L680 605L725 620L763 622",
      "M693 628L695 597L712 600L735 650L750 690L760 718L757 708",
      "M762 570L772 575L800 630L825 695L830 750L845 820L870 880L886 905L887 926L886 750L870 650L850 560L850 523L856 535L857 590L862 580",
      "M855 573L905 557L940 557L953 580L950 605L920 628L905 631L845 631",
      "M950 590L975 625L990 660L1015 685L1050 688L1057 640L1040 605L1000 578L967 571L960 595L965 620L1020 660L1058 661L1060 645",
      "M1063 615L1085 652L1105 664L1120 650L1130 592L1128 650L1140 695",
      "M1110 505L1103 515L1100 540L1085 570",
      "M1125 549L1140 560L1175 625L1190 680L1207 740L1212 738L1218 618L1219 705L1235 715L1270 715L1270 606L1273 650L1310 684L1338 685L1348 665L1352 615L1370 690L1408 755",
    ],
  },
];

function Notes() {
  return (
    <div className="pointer-events-none absolute inset-0 font-['Liberation_Sans',Arial,sans-serif] text-[16px] leading-[18px] text-[#141414]">
      <svg width="1920" height="1040" viewBox="0 0 1920 1040" className="absolute inset-0" fill="none" stroke="#000" shapeRendering="crispEdges">
        {ink.map((g) => (
          <g key={g.t} transform={g.t}>
            {g.d.map((d) => <path key={d} d={d} strokeWidth="1" vectorEffect="non-scaling-stroke" />)}
          </g>
        ))}
      </svg>
      <div className="absolute left-[55px] top-[226px]"><T w={228}>Захват камеры и отображение</T></div>
      <div className="absolute left-[38px] top-[412px]"><T w={176}>Загрузить изображение</T></div>
      <div className="absolute left-[19px] top-[551px]"><T w={294}>Сохранить маску и установить текущей</T></div>
      <div className="absolute left-[38px] top-[628px]"><T w={187}>Загрузить существ маску</T></div>
      <div className="absolute left-[76px] top-[730px]"><T w={221}>Отобразить участки интереса</T></div>
    </div>
  );
}

const menu = [
  { t: "Файл", w: 29 },
  { t: "Правка", w: 40 },
  { t: "Форма", w: 38 },
  { t: "Вид", w: 20 },
  { t: "Настройки", w: 60 },
  { t: "Окно", w: 29 },
  { t: "Справка", w: 46 },
];

export default function App() {
  return (
    <div className={"relative flex h-[1040px] w-[1920px] flex-col overflow-hidden bg-[#f0f0f0] text-black " + SEGOE}>
      <Defs />
      <div className="flex h-[24px] shrink-0 items-center bg-white pl-[3px] pr-[19px]">
        <svg width="15" height="14" viewBox="0 0 15 14">
          <path d="M2 0H15V11L13 12H0V2Z" fill="#41cd52" />
          <text x="2.500" y="9" fontSize="9" fontWeight="bold" fill="#e8ffe8" fontFamily="Open Sans" textLength="10">Qt</text>
          <path d="M1 10.500H12V13.500H1Z" fill="#d8a83c" />
        </svg>
        <T w={62} className="ml-[5px]">Qt Designer</T>
        <svg width="102" height="12" viewBox="0 0 102 12" className="mb-[4px] ml-auto" fill="none" stroke="#000">
          <path d="M0 6.500H10M45.500 3.500H53.500V11.500H45.500ZM47.500 3V1.500H55.500V9.500H54M90.500 1.500L100.500 11M100.500 1.500L90.500 11" />
        </svg>
      </div>
      <div className="flex h-[19px] shrink-0 gap-[16px] bg-white pl-[8px] pt-[2px]">
        {menu.map((m) => <T key={m.t} w={m.w}>{m.t}</T>)}
      </div>
      <div className="h-[35px] shrink-0 border-b border-[#b8b8b8]"><ToolbarRow /></div>
      <div className="flex h-[942px] shrink-0">
        <WidgetBox />
        <div className="relative ml-[4px] w-[1144px] overflow-hidden border border-[#828790] bg-[#a0a0a0]">
          <FormWindow />
        </div>
        <div className="ml-[4px] flex w-[512px] flex-col pt-px">
          <ObjectInspector />
          <PropertyEditor />
          <ResourceBrowser />
        </div>
      </div>
      <Notes />
    </div>
  );
}
